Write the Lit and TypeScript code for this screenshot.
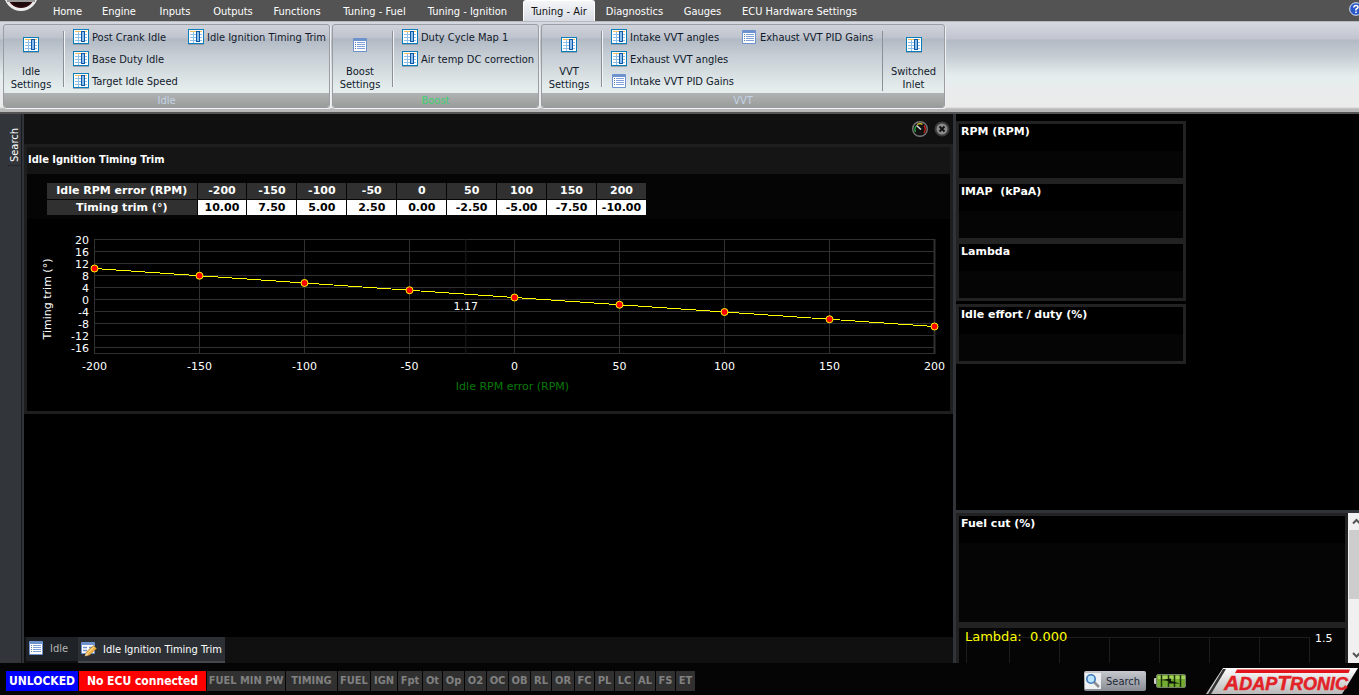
import { LitElement, html, svg, css } from "lit";
import { customElement } from "lit/decorators.js";
import { classMap } from "lit/directives/class-map.js";

const gridIcon = html`<svg class="ico" width="16" height="16" viewBox="0 0 16 16" aria-hidden="true">
  <rect x=".5" y=".5" width="15" height="14" fill="#fff" stroke="#0b7dbb"/>
  <path d="M2 2.500H14" stroke="#f6bf62" stroke-width="1"/>
  <path d="M2 5.500H14M2 8.500H14M2 11.500H14M5.500 3V14" stroke="#8fbfe6"/>
  <rect x="8.500" y="2.500" width="3" height="10" fill="#8dbdea" stroke="#0b57a5"/>
  <path d="M0 15.500H16" stroke="#7b8794" opacity=".6"/>
</svg>`;

const listIcon = html`<svg class="ico" width="16" height="16" viewBox="0 0 16 16" aria-hidden="true">
  <rect x="1" y="1" width="14" height="14" rx="1" fill="#6d92cd"/>
  <rect x="2" y="4" width="12" height="10" fill="#fff"/>
  <path d="M5 5.500H13M5 7.500H13M5 9.500H13M5 11.500H13" stroke="#7fa0d8"/>
  <path d="M3 5.500H4M3 7.500H4M3 9.500H4M3 11.500H4" stroke="#5b7db3"/>
</svg>`;

const editIcon = html`<svg class="ico" width="16" height="16" viewBox="0 0 16 16" aria-hidden="true">
  <rect x="0" y="1" width="14" height="12" rx="1" fill="#6d92cd"/>
  <rect x="1" y="4" width="12" height="8" fill="#fff"/>
  <path d="M2 6.500H6M8 6.500H12M2 9.500H6" stroke="#6d92cd" stroke-width="1.500"/>
  <path d="M4 15L5.500 11L12.500 4.500L15.500 7.500L8.500 14Z" fill="#f3b54a" stroke="#a87429" stroke-width=".7"/>
  <path d="M6.500 12L13 6" stroke="#ffe39c"/>
  <path d="M4 15L5.200 12L7.500 14Z" fill="#f1ddbd"/>
</svg>`;

const TABS: [string, number][] = [
  ["Home", 49], ["Engine", 54], ["Inputs", 58], ["Outputs", 58], ["Functions", 70],
  ["Tuning - Fuel", 85], ["Tuning - Ignition", 101], ["Tuning - Air", 72],
  ["Diagnostics", 79], ["Gauges", 57], ["ECU Hardware Settings", 137],
];

type Cmd = { label: string; list?: boolean };
const GROUPS: { name: string; cls: string; lead: Cmd; items: Cmd[]; tail?: Cmd }[] = [
  {
    name: "Idle", cls: "idle", lead: { label: "Idle Settings" },
    items: [{ label: "Post Crank Idle" }, { label: "Base Duty Idle" }, { label: "Target Idle Speed" }, { label: "Idle Ignition Timing Trim" }],
  },
  {
    name: "Boost", cls: "boost", lead: { label: "Boost Settings", list: true },
    items: [{ label: "Duty Cycle Map 1" }, { label: "Air temp DC correction" }],
  },
  {
    name: "VVT", cls: "vvt", lead: { label: "VVT Settings" },
    items: [{ label: "Intake VVT angles" }, { label: "Exhaust VVT angles" }, { label: "Intake VVT PID Gains", list: true }, { label: "Exhaust VVT PID Gains", list: true }],
    tail: { label: "Switched Inlet" },
  },
];

const RPM = [-200, -150, -100, -50, 0, 50, 100, 150, 200];
const TRIM = [10, 7.5, 5, 2.5, 0, -2.5, -5, -7.5, -10];

const FLAGS: [string, number][] = [
  ["FUEL MIN PW", 78], ["TIMING", 51], ["FUEL", 32], ["IGN", 26], ["Fpt", 24], ["Ot", 19], ["Op", 21],
  ["O2", 21], ["OC", 21], ["OB", 21], ["RL", 20], ["OR", 22], ["FC", 19], ["PL", 19], ["LC", 19],
  ["AL", 20], ["FS", 19], ["ET", 19],
];

@customElement("timing-chart")
export class TimingChart extends LitElement {
  static styles = css`
    :host { display: block; height: 192px; }
    .frame { display: grid; grid-template-columns: 67px 1fr 16px; padding-top: 20px; }
    svg { overflow: visible; display: block; }
    text { font: 11px/1 "DejaVu Sans", sans-serif; fill: #fff; }
    .grid { stroke: #303030; }
    .edge { stroke: #303030; stroke-width: 2; }
    .cursor { stroke: #1c1c1c; }
    .curve { stroke: #ff0; shape-rendering: crispEdges; }
    .dot { fill: #f00; stroke: #ff0; }
    .name { fill: #087a08; }
  `;
  render() {
    const x = (v: number) => `${((v + 200) / 400) * 100}%`;
    const y = (v: number) => 58 - v * 2.9;
    const ticks = [20, 16, 12, 8, 4, 0, -4, -8, -12, -16];
    return html`<div class="frame">
      <svg width="67" height="115" aria-hidden="true">
        <text transform="translate(24 60) rotate(-90)" text-anchor="middle">Timing trim (°)</text>
        ${ticks.map((t, i) => svg`<text x="62" y=${5 + i * 12} text-anchor="end">${t}</text>`)}
      </svg>
      <svg width="100%" height="115" role="img" aria-label="Timing trim against idle RPM error">
        ${ticks.map((_, i) => svg`<line class="grid" x1="0" x2="100%" y1=${i * 12 + 0.5} y2=${i * 12 + 0.5}/>`)}
        <line class="grid" x1="0" x2="100%" y1="114.5" y2="114.5"/>
        <svg x=".5" width="100%" height="115">
          ${RPM.slice(0, -1).map((v) => svg`<line class="grid" x1=${x(v)} x2=${x(v)} y1="0" y2="115"/>`)}
          <line class="edge" x1="100%" x2="100%" y1="0" y2="115"/>
          <line class="cursor" x1="44.200%" x2="44.200%" y1="0" y2="115"/>
          ${RPM.slice(1).map((v, i) => svg`<line class="curve" x1=${x(RPM[i])} y1=${y(TRIM[i]) + 0.5} x2=${x(v)} y2=${y(TRIM[i + 1]) + 0.5}/>`)}
          ${RPM.map((v, i) => svg`<circle class="dot" cx=${x(v)} cy=${y(TRIM[i]) + 0.5} r="3.500"/>`)}
          ${RPM.map((v) => svg`<text x=${x(v)} y="131" text-anchor="middle">${v}</text>`)}
          <text x="44.200%" y="71" text-anchor="middle">1.17</text>
          <text class="name" x="50%" y="151" dx="-2" text-anchor="middle">Idle RPM error (RPM)</text>
        </svg>
      </svg>
    </div>`;
  }
}

@customElement("app-root")
export class AppRoot extends LitElement {
  static styles = css`
    :host {
      display: grid; grid-template-rows: 21px 93px minmax(0, 1fr) 32px; height: 100vh; overflow: hidden;
      background: #000; color: #fff; font: 11px/13px "DejaVu Sans Condensed", "DejaVu Sans", sans-serif;
      --v: "DejaVu Sans", sans-serif;
    }
    * { box-sizing: border-box; }
    button { font: inherit; color: inherit; background: none; border: 0; padding: 0; margin: 0; white-space: nowrap; }
    h2, h3 { margin: 0; }
    .ico { flex: none; display: block; }

    .menu { display: flex; background: #535353; padding-left: 43px; position: relative; }
    .tab { flex: none; height: 21px; padding-top: 2px; }
    .tab.on { margin-left: 5px; background: linear-gradient(#f4f6f8, #d9dce4); color: #111; border: 1px solid #fff; border-bottom: 0; border-radius: 3px 3px 0 0; padding-top: 1px; }
    .orb { position: absolute; left: 2px; top: 0; }
    .help { position: absolute; right: -4px; top: 2px; height: 14px; }

    .ribbon {
      display: flex; gap: 2px; padding: 2px 3px 4px; border-top: 1px solid #b5b9bc; border-bottom: 2px solid #555;
      background: linear-gradient(#d6d9e1 0, #c2c5d0 17px, #b2bac5 18px, #c5ccd3 34px, #e4eeed 54px, #e9eced 66px, #ebebea 85px, #b9b9b9 87px);
      color: #111a2b;
    }
    .group { display: grid; grid-template-rows: minmax(0, 1fr) 14px; border: 1px solid #9a9da2; border-radius: 3px; box-shadow: 1px 1px 0 #eef0f2;
      background: linear-gradient(#cfd2da 0, #bfc3cd 13px, #b1b9c4 14px, #c6cdd4 30px, #e3ebeb 62px, #e6ecec 68px); }
    .idle { width: 327px; } .boost { width: 207px; } .vvt { width: 404px; }
    .body { display: flex; min-width: 0; }
    .lead { flex: none; width: 54px; margin: 6px 0 2px; display: flex; flex-direction: column; align-items: center; gap: 12px; padding-top: 6px; white-space: normal; }
    .lead.tail { width: 62px; border-left: 1px solid #8c9096; margin-left: auto; }
    .cap { width: 52px; text-align: center; }
    .cmds { flex: 1; min-width: 0; display: grid; grid-template-rows: repeat(3, 22px); grid-auto-flow: column; justify-content: start; align-content: start;
      padding-left: 10px; margin: 1px 0 0 5px; position: relative; }
    .idle .cmds { grid-template-columns: 115px auto; }
    .vvt .cmds { grid-template-columns: 130px auto; }
    .cmds::before { content: ""; position: absolute; left: 0; top: 5px; height: 56px; border-left: 1px solid #8c9096; border-right: 1px solid #f2f4f6; }
    .cmd { display: flex; align-items: center; gap: 3px; }
    .cmd span { line-height: 14px; padding-top: 2px; }
    .foot { background: linear-gradient(#b0b3b3, #9a9c9b); color: #c3d2e6; text-align: center; line-height: 15px; font-size: 11px; font-weight: 400; border-radius: 0 0 2px 2px; }
    .boost .foot { color: #41d073; }

    .main { display: grid; grid-template-columns: 24px minmax(0, 1fr) 3px 403px; min-height: 0; }
    .side { background: #32353a; border-right: 2px solid #303338; box-shadow: inset -1px 0 #181a1d; }
    .vert { writing-mode: vertical-rl; transform: rotate(180deg); width: 13px; height: 52px; margin-left: 8px; text-align: center; border-top: 1px solid #24262a; padding-bottom: 12px; }
    .split { background: #303338; }
    .work { display: flex; flex-direction: column; min-width: 0; }
    .bar { height: 30px; background: #101010; display: flex; justify-content: flex-end; align-items: center; gap: 6px; padding-right: 3px; }
    .bar button, .bar svg { display: block; }
    .panel { border: 3px solid #1e1e1e; }
    .title { background: #151515; height: 27px; line-height: 26px; padding-left: 1px; font-size: 11px; font-weight: 700; }
    .top { background: #050505; height: 45px; padding: 9px 0 0 20px; }
    table { border-collapse: collapse; table-layout: fixed; width: 600px; font: bold 11px/15px var(--v); text-align: center; }
    th, td { padding: 0; border-right: 1px solid #050505; height: 16px; white-space: nowrap; }
    th { background: #303030; }
    td { background: #fff; color: #000; }
    tr + tr > * { border-top: 1px solid #050505; }
    .first { width: 150px; }
    .docs { margin-top: auto; height: 26px; background: #101010; display: flex; padding-left: 2px; }
    .doc { display: flex; align-items: center; gap: 6px; padding: 0 7px 2px 2px; background: #1f2226; color: #b5b5b5; height: 24px; width: 52px; }
    .doc.on { background: #2c2f34; color: #fff; width: 147px; height: 26px; padding: 0 7px 0 3px; border-bottom: 2px solid #44474c; }

    .right { display: flex; flex-direction: column; min-height: 0; }
    .gauges { height: 396px; padding-top: 7px; }
    .gauge { width: 230px; height: 60px; border: 3px solid #222; background: linear-gradient(#000 27px, #050505 27px); font: bold 11px/15px var(--v); padding-left: 2px; white-space: pre; }
    .gauge:last-child { margin-top: 3px; }
    .logs { border-top: 3px solid #303338; flex: 1; min-height: 0; display: flex; overflow: hidden; }
    .list { flex: 1; min-width: 0; }
    .gauge.wide { width: auto; height: 112px; }
    .log { border: 3px solid #222; border-bottom: 0; height: 38px; background: #050505; }
    .log svg { display: block; }
    .log text { font: 13px "DejaVu Sans", sans-serif; fill: #ff0; }
    .log .max { font-size: 11px; fill: #fff; }
    .scroll { width: 11px; background: #f0f0f0; display: flex; flex-direction: column; justify-content: space-between; overflow: hidden; }
    .scroll svg { display: block; }
    .thumb { background: #cdcdcd; height: 69px; margin: 0 0 auto 1px; }

    .status { background: #050505; display: flex; align-items: center; gap: 1px; padding: 4px 2px 0 6px; font-weight: 700; }
    .flag { flex: none; height: 20px; line-height: 20px; text-align: center; background: #303030; color: #808080; white-space: nowrap; font-size: 11px; }
    .flag.lock { background: #00f; color: #fff; width: 72px; font-size: 12px; }
    .flag.ecu { background: #f00; color: #fff; width: 127px; font-size: 12px; }
    .find { display: flex; align-items: center; gap: 5px; margin-left: auto; width: 62px; height: 20px; padding-left: 1px; border-radius: 2px; background: linear-gradient(#c5c8cd, #898d93); color: #1d2836; font-weight: 400; }
    .batt { margin: 0 18px 0 7px; }
    .logo { overflow: visible; margin-right: -1px; }
  `;

  private big(c: Cmd, tail = false) {
    return html`<button class=${classMap({ lead: true, tail })}>${c.list ? listIcon : gridIcon}<span class="cap">${c.label}</span></button>`;
  }

  render() {
    return html`
      <nav class="menu">
        <svg class="orb" width="40" height="13" viewBox="0 0 40 13" aria-hidden="true">
          <circle cx="19" cy="-6" r="15.500" fill="#3a0d12" stroke="#ececec" stroke-width="3"/>
          <path d="M10 2L26 1L28 4Q20 9 12 5Z" fill="#1d080b"/><path d="M5 0H33V2H5Z" fill="#999"/>
        </svg>
        ${TABS.map(([t, w]) => html`<button class=${classMap({ tab: true, on: t === "Tuning - Air" })} style="width:${w}px">${t}</button>`)}
        <button class="help" aria-label="Help"><svg width="14" height="14" viewBox="0 0 14 14">
          <circle cx="7" cy="7" r="6.300" fill="#2858c8" stroke="#dce6fa"/>
          <path d="M4.800 5.500Q5 3.500 7 3.500T9 5.200Q9 6.300 7 7.200V8.500M7 9.500V11" fill="none" stroke="#fff" stroke-width="1.600"/>
        </svg></button>
      </nav>

      <header class="ribbon">
        ${GROUPS.map((g) => html`<section class="group ${g.cls}">
          <div class="body">${this.big(g.lead)}
            <div class="cmds">${g.items.map((c) => html`<button class="cmd">${c.list ? listIcon : gridIcon}<span>${c.label}</span></button>`)}</div>
            ${g.tail ? this.big(g.tail, true) : ""}
          </div>
          <h2 class="foot">${g.name}</h2>
        </section>`)}
      </header>

      <main class="main">
        <aside class="side"><button class="vert">Search</button></aside>
        <section class="work">
          <div class="bar">
            <button aria-label="Gauge"><svg width="16" height="16" viewBox="0 0 16 16">
              <circle cx="8" cy="8" r="7.300" fill="#111" stroke="#777" stroke-width="1.400"/>
              <path d="M3.500 11Q2 8 4 5" fill="none" stroke="#1fa83a" stroke-width="1.300"/>
              <path d="M5 3.500Q8 2 10.500 3.300" fill="none" stroke="#d8c81c" stroke-width="1.300"/>
              <path d="M12 4.500Q14.500 8 12 12" fill="none" stroke="#d42018" stroke-width="1.300"/>
              <path d="M4.500 4.500L9 8.500" stroke="#ddd" stroke-width="1.500"/>
            </svg></button>
            <button aria-label="Close"><svg width="16" height="16" viewBox="0 0 16 16">
              <circle cx="8" cy="8" r="6.500" fill="#8b8b8b" stroke="#3c3c3c" stroke-width="2"/>
              <path d="M5.500 5.500L10.500 10.500M10.500 5.500L5.500 10.500" stroke="#111" stroke-width="1.800"/>
            </svg></button>
          </div>
          <article class="panel">
            <h2 class="title">Idle Ignition Timing Trim</h2>
            <div class="top"><table>
              <tr><th class="first">Idle RPM error (RPM)</th>${RPM.map((v) => html`<th>${v}</th>`)}</tr>
              <tr><th>Timing trim (°)</th>${TRIM.map((v) => html`<td>${v.toFixed(2)}</td>`)}</tr>
            </table></div>
            <timing-chart></timing-chart>
          </article>
          <div class="docs">
            <button class="doc">${listIcon}<span>Idle</span></button>
            <button class="doc on">${editIcon}<span>Idle Ignition Timing Trim</span></button>
          </div>
        </section>
        <div class="split"></div>
        <section class="right">
          <div class="gauges">
            ${["RPM (RPM)", "IMAP  (kPaA)", "Lambda", "Idle effort / duty (%)"].map((t) => html`<h3 class="gauge">${t}</h3>`)}
          </div>
          <div class="logs">
            <div class="list">
              <h3 class="gauge wide">Fuel cut (%)</h3>
              <div class="log"><svg width="100%" height="35">
                <path d="M7.500 9V35M7 9.500H350M50.500 9V35M100.500 9V35M150.500 9V35M200.500 9V35M250.500 9V35M300.500 9V35M350.500 9V35" fill="none" stroke="#1d1d1d"/>
                <text x="6" y="13" xml:space="preserve">Lambda:  0.000</text>
                <text class="max" x="356" y="14">1.5</text>
              </svg></div>
            </div>
            <div class="scroll" aria-hidden="true">
              <svg width="17" height="17"><path d="M5 10.500L8.500 7L12 10.500" fill="none" stroke="#555" stroke-width="2"/></svg>
              <div class="thumb"></div>
              <svg width="17" height="17"><path d="M5 7L8.500 10.500L12 7" fill="none" stroke="#555" stroke-width="2"/></svg>
            </div>
          </div>
        </section>
      </main>

      <footer class="status">
        <span class="flag lock">UNLOCKED</span><span class="flag ecu">No ECU connected</span>
        ${FLAGS.map(([t, w]) => html`<span class="flag" style="width:${w}px">${t}</span>`)}
        <button class="find"><svg width="16" height="16" viewBox="0 0 16 16" aria-hidden="true">
          <rect width="16" height="16" fill="#eef0f2"/>
          <path d="M9 9L14 14" stroke="#8f8f8f" stroke-width="2.500"/>
          <circle cx="6" cy="6" r="4.200" fill="#b9e4fb" stroke="#3f79b8" stroke-width="1.600"/>
        </svg><span>Search</span></button>
        <svg class="batt" width="33" height="14" viewBox="0 0 33 14" aria-hidden="true">
          <rect x="0" y="4" width="4" height="6" rx="1" fill="#ccc"/>
          <rect x="2.500" y=".5" width="29" height="13" rx="1.500" fill="#74ab33" stroke="#77806c"/>
          <path d="M4 3.500H31" stroke="#a6d257" stroke-width="3"/>
          <path d="M7.500 1V13M14.500 1V13M20.500 1V13M26.500 1V13" stroke="#1c3507" stroke-width="1.500"/>
          <path d="M7 6L17 4.500L17 7L26 9.500L15 9.500L15 7Z" fill="#0a1204"/>
        </svg>
        <svg class="logo" width="152" height="26" viewBox="0 0 152 26" role="img" aria-label="Adaptronic">
          <defs><linearGradient id="plate" x2="0" y2="1"><stop stop-color="#fff"/><stop offset="1" stop-color="#b8b8b8"/></linearGradient></defs>
          <path d="M17 0H152L136 26H0Z" fill="url(#plate)"/>
          <path d="M20 1L5 26H2L17 1Z" fill="#333"/>
          <path d="M31 1.500H144L142.500 5H29Z" fill="#e1141c"/>
          <text x="18" y="22" font-family="Liberation Sans, sans-serif" font-weight="700" font-style="italic" font-size="18" fill="#e32228" stroke="#e32228" stroke-width=".5"><tspan font-size="21">A</tspan>DAP<tspan font-size="21">T</tspan>RONIC</text>
        </svg>
      </footer>`;
  }
}
